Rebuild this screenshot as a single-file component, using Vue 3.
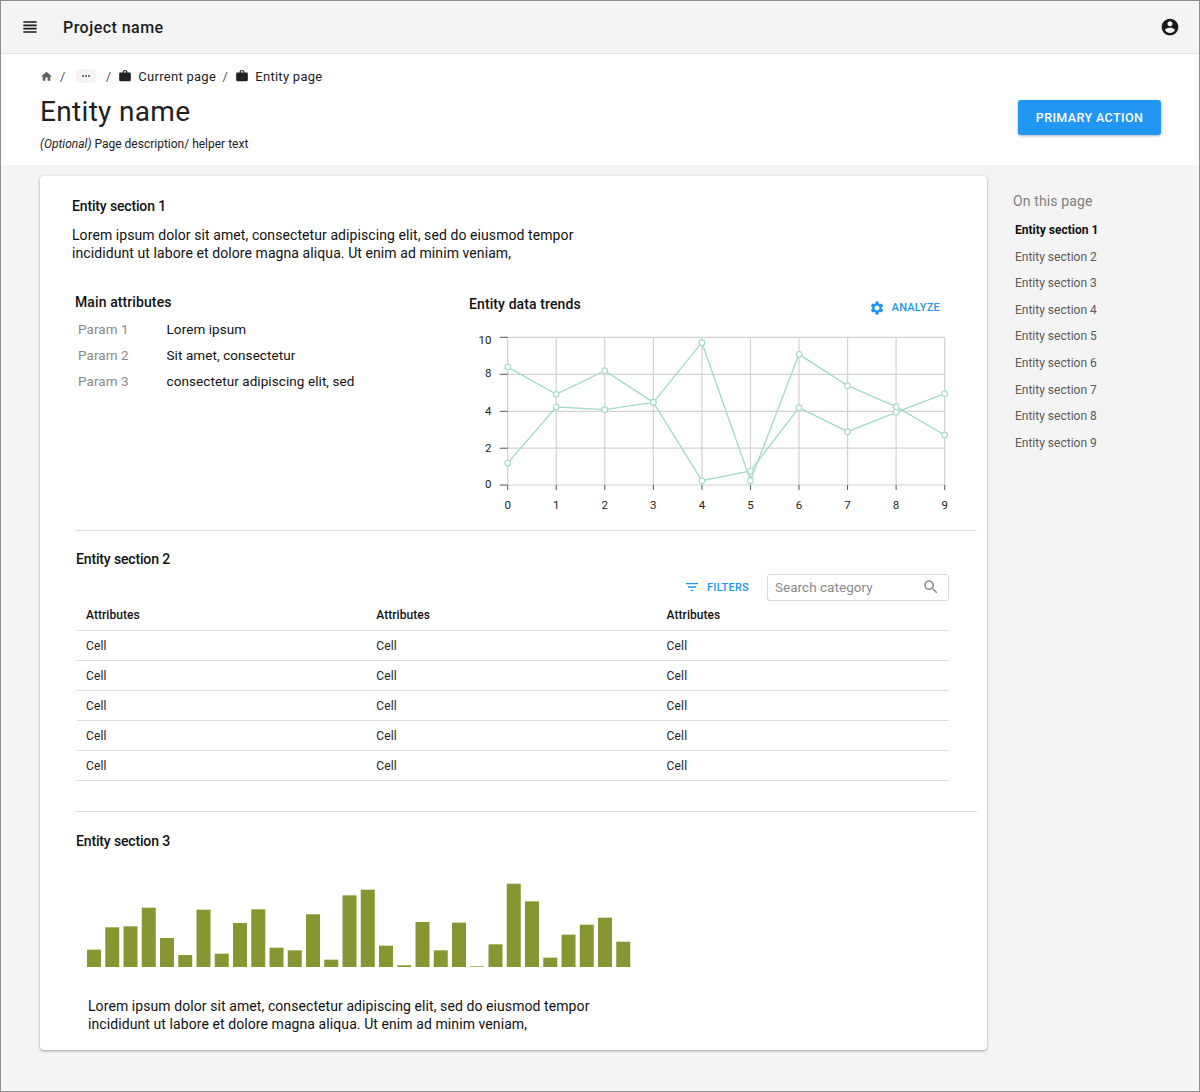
<script setup>
const sections = [1,2,3,4,5,6,7,8,9].map(n => `Entity section ${n}`)
const params = [['Param 1','Lorem ipsum'],['Param 2','Sit amet, consectetur'],['Param 3','consectetur adipiscing elit, sed']]
const rows = [1,2,3,4,5]
const lorem1 = 'Lorem ipsum dolor sit amet, consectetur adipiscing elit, sed do eiusmod tempor'
const lorem2 = 'incididunt ut labore et dolore magna aliqua. Ut enim ad minim veniam,'

const x0 = 47.7, dx = 48.55
const xs = Array.from({length:10},(_,i)=>x0+i*dx)
const yTicks = [{l:'10',y:47.3,ly:54},{l:'8',y:84.3,ly:87.3},{l:'4',y:121.3,ly:124.7},{l:'2',y:158.2,ly:161.7},{l:'0',y:195,ly:198.3}]
const s1 = [231,313,242,337,572,543,353,425,367,311].map(v=>v/3)
const s2 = [519,351,359,337,158,572,193,287,350,435].map(v=>v/3)
const series = [s1,s2].map(s=>s.map((y,i)=>({x:xs[i],y})))
const pts = s => s.map(p=>`${p.x},${p.y}`).join(' ')

const tops = [238,171,168,112,203,254,118,250,158,117,232,240,132,268,75,58,226,285,155,240,157,288,222,40,93,262,193,163,142,214]
const bars = tops.map((t,i)=>({x:i*18.25,h:(290-t)/3}))
</script>

<template>
  <div class="frame">
    <header class="topbar">
      <svg class="menu" viewBox="0 0 24 24" width="20" height="20"><path d="M4 15h16v-2H4v2zm0 4h16v-2H4v2zm0-8h16V9H4v2zm0-6v2h16V5H4z"/></svg>
      <span class="project">Project name</span>
      <svg class="account" viewBox="0 0 24 24" width="20" height="20"><path d="M12 2C6.48 2 2 6.48 2 12s4.48 10 10 10 10-4.48 10-10S17.52 2 12 2zm0 3c1.66 0 3 1.34 3 3s-1.34 3-3 3-3-1.34-3-3 1.34-3 3-3zm0 14.2c-2.5 0-4.71-1.28-6-3.22.03-1.99 4-3.08 6-3.08 1.99 0 5.97 1.09 6 3.08-1.29 1.94-3.5 3.22-6 3.22z"/></svg>
    </header>

    <section class="pagehead">
      <div class="headtext">
        <nav class="crumbs">
          <svg class="home" viewBox="0 0 24 24" width="13" height="13"><path d="M10 20v-6h4v6h5v-8h3L12 3 2 12h3v8z"/></svg>
          <span class="sep s1">/</span>
          <span class="dots"><svg viewBox="0 0 24 24" width="12" height="12"><path d="M6 10c-1.1 0-2 .9-2 2s.9 2 2 2 2-.9 2-2-.9-2-2-2zm12 0c-1.1 0-2 .9-2 2s.9 2 2 2 2-.9 2-2-.9-2-2-2zm-6 0c-1.1 0-2 .9-2 2s.9 2 2 2 2-.9 2-2-.9-2-2-2z"/></svg></span>
          <span class="sep s2">/</span>
          <svg class="work" viewBox="0 0 24 24" width="14" height="14"><path d="M20 6h-4V4c0-1.11-.89-2-2-2h-4c-1.11 0-2 .89-2 2v2H4c-1.11 0-1.99.89-1.99 2L2 19c0 1.11.89 2 2 2h16c1.11 0 2-.89 2-2V8c0-1.11-.89-2-2-2zm-6 0h-4V4h4v2z"/></svg>
          <span class="crumb">Current page</span>
          <span class="sep s3">/</span>
          <svg class="work" viewBox="0 0 24 24" width="14" height="14"><path d="M20 6h-4V4c0-1.11-.89-2-2-2h-4c-1.11 0-2 .89-2 2v2H4c-1.11 0-1.99.89-1.99 2L2 19c0 1.11.89 2 2 2h16c1.11 0 2-.89 2-2V8c0-1.11-.89-2-2-2zm-6 0h-4V4h4v2z"/></svg>
          <span class="crumb">Entity page</span>
        </nav>
        <h1>Entity name</h1>
        <p class="desc"><em>(Optional)</em> Page description/ helper text</p>
      </div>
      <button class="primary">PRIMARY ACTION</button>
    </section>

    <main class="content">
      <article class="card">
        <section class="intro">
          <h2 class="sec">Entity section 1</h2>
          <p class="lorem">{{ lorem1 }}<br>{{ lorem2 }}</p>
        </section>

        <section class="split">
          <div class="attrs">
            <h2>Main attributes</h2>
            <dl>
              <div v-for="p in params" :key="p[0]" class="param">
                <dt>{{ p[0] }}</dt><dd>{{ p[1] }}</dd>
              </div>
            </dl>
          </div>
          <div class="trends">
            <div class="trendhead">
              <h2>Entity data trends</h2>
              <span class="textbtn analyze">
                <svg viewBox="0 0 24 24" width="16" height="16"><path d="M19.14 12.94c.04-.3.06-.61.06-.94 0-.32-.02-.64-.07-.94l2.03-1.58c.18-.14.23-.41.12-.61l-1.92-3.32c-.12-.22-.37-.29-.59-.22l-2.39.96c-.5-.38-1.03-.7-1.62-.94l-.36-2.54c-.04-.24-.24-.41-.48-.41h-3.84c-.24 0-.43.17-.47.41l-.36 2.54c-.59.24-1.13.57-1.62.94l-2.39-.96c-.22-.08-.47 0-.59.22L2.74 8.87c-.12.21-.08.47.12.61l2.03 1.58c-.05.3-.09.63-.09.94s.02.64.07.94l-2.03 1.58c-.18.14-.23.41-.12.61l1.92 3.32c.12.22.37.29.59.22l2.39-.96c.5.38 1.03.7 1.62.94l.36 2.54c.05.24.24.41.48.41h3.84c.24 0 .44-.17.47-.41l.36-2.54c.59-.24 1.13-.56 1.62-.94l2.39.96c.22.08.47 0 .59-.22l1.92-3.32c.12-.22.07-.47-.12-.61l-2.01-1.58zM12 15.6c-1.98 0-3.6-1.62-3.6-3.6s1.62-3.6 3.6-3.6 3.6 1.62 3.6 3.6-1.62 3.6-3.6 3.6z"/></svg>
                ANALYZE
              </span>
            </div>
            <svg class="linechart" width="500" height="190" viewBox="0 40 500 190">
              <g stroke="#d2d2d2" stroke-width="1.2" fill="none">
                <line v-for="(x,i) in xs" :key="'v'+i" :x1="x" :x2="x" y1="47" y2="195"/>
                <line v-for="t in yTicks" :key="'h'+t.l" :x1="x0" x2="484.7" :y1="t.y" :y2="t.y"/>
              </g>
              <g stroke="#555" stroke-width="1">
                <line v-for="t in yTicks" :key="'t'+t.l" :x1="x0-8" :x2="x0" :y1="t.y" :y2="t.y"/>
                <line v-for="(x,i) in xs" :key="'u'+i" :x1="x" :x2="x" y1="195" y2="200"/>
              </g>
              <polyline v-for="(s,i) in series" :key="'s'+i" :points="pts(s)" fill="none" stroke="#a3dcc0" stroke-width="1.3"/>
              <g v-for="(s,i) in series" :key="'m'+i">
                <circle v-for="(p,j) in s" :key="j" :cx="p.x" :cy="p.y" r="2.8" fill="#fff" stroke="#a3dcc0" stroke-width="1.1"/>
              </g>
              <g class="ticklabel">
                <text v-for="t in yTicks" :key="'l'+t.l" x="31.5" :y="t.ly" text-anchor="end">{{ t.l }}</text>
                <text v-for="(x,i) in xs" :key="'x'+i" :x="x" y="219" text-anchor="middle">{{ i }}</text>
              </g>
            </svg>
          </div>
        </section>

        <section class="tablesec">
          <h2 class="sec">Entity section 2</h2>
          <div class="tools">
            <span class="textbtn filters">
              <svg viewBox="0 0 24 24" width="16" height="16"><path d="M10 18h4v-2h-4v2zM3 6v2h18V6H3zm3 7h12v-2H6v2z"/></svg>
              FILTERS
            </span>
            <div class="search">
              <span>Search category</span>
              <svg viewBox="0 0 24 24" width="18" height="18"><path d="M15.5 14h-.79l-.28-.27C15.41 12.59 16 11.11 16 9.5 16 5.91 13.09 3 9.5 3S3 5.91 3 9.5 5.91 16 9.5 16c1.61 0 3.09-.59 4.23-1.57l.27.28v.79l5 4.99L20.49 19l-4.99-5zm-6 0C7.01 14 5 11.99 5 9.5S7.01 5 9.5 5 14 7.01 14 9.5 11.99 14 9.5 14z"/></svg>
            </div>
          </div>
          <div class="table">
            <div class="tr th"><span>Attributes</span><span>Attributes</span><span>Attributes</span></div>
            <div v-for="r in rows" :key="r" class="tr"><span>Cell</span><span>Cell</span><span>Cell</span></div>
          </div>
        </section>

        <section class="barsec">
          <h2 class="sec">Entity section 3</h2>
          <svg class="barchart" width="544" height="90" viewBox="0 0 544 90">
            <rect v-for="(b,i) in bars" :key="i" :x="b.x" :y="88-b.h" width="14" :height="b.h" fill="#879632"/>
          </svg>
          <p class="lorem bottom">{{ lorem1 }}<br>{{ lorem2 }}</p>
        </section>
      </article>

      <aside class="toc">
        <div class="tochead">On this page</div>
        <a v-for="(s,i) in sections" :key="s" :class="{active:i===0}">{{ s }}</a>
      </aside>
    </main>
  </div>
</template>

<style scoped>
.frame { width:1200px; height:1092px; box-sizing:border-box; border:1px solid #8f8f8f; background:#f4f4f4; display:flex; flex-direction:column; overflow:hidden; font-family:Roboto,sans-serif; color:#000; }
.topbar { height:53px; flex:none; box-sizing:border-box; display:flex; align-items:center; padding:0 19px; border-bottom:1px solid #e3e3e3; }
.menu { fill:#1a1a1a; }
.project { margin-left:23px; font-size:16px; font-weight:500; letter-spacing:.47px; color:#1c1c1c; }
.account { margin-left:auto; fill:#1a1a1a; }

.pagehead { height:111px; flex:none; background:#fff; display:flex; justify-content:space-between; padding:0 38px 0 39px; }
.crumbs { display:flex; align-items:center; height:20px; margin-top:12px; font-size:13px; letter-spacing:.28px; color:#212121; }
.home { fill:#616161; }
.sep { color:#555; }
.s1 { margin-left:7px; }
.dots { display:flex; align-items:center; justify-content:center; width:20px; height:14px; margin-left:10px; background:#f4f4f4; border-radius:3px; fill:#555; }
.s2 { margin-left:10px; }
.work { fill:#212121; margin-left:7px; }
.crumb { margin-left:6px; }
.s3 { margin-left:6.5px; }
h1 { margin:8px 0 0; font-size:28px; line-height:36px; font-weight:400; letter-spacing:.32px; color:#212121; }
.desc { margin:6px 0 0; font-size:12px; line-height:16px; letter-spacing:0; color:#212121; }
.primary { align-self:flex-start; margin-top:46px; width:143px; height:35px; border:0; border-radius:3px; background:#2196f3; color:#fff; font:500 12.5px Roboto,sans-serif; letter-spacing:.4px; box-shadow:0 1px 3px rgba(0,0,0,.3); padding:0; }

.content { flex:1; display:flex; align-items:flex-start; padding:11px 0 0 39px; }
.card { width:947px; height:874px; flex:none; box-sizing:border-box; background:#fff; border-radius:4px; box-shadow:0 1px 3px rgba(0,0,0,.35); display:flex; flex-direction:column; }
h2 { margin:0; font-size:14px; line-height:20px; font-weight:500; letter-spacing:.1px; color:#111; }
h2.sec { letter-spacing:-.15px; }
.lorem { margin:0; font-size:14px; line-height:18px; letter-spacing:.083px; color:#111; }
.intro { padding:20px 0 0 32px; height:84px; box-sizing:content-box; }
.intro .lorem { margin-top:10px; }

.split { display:flex; margin-left:35px; height:244px; border-bottom:1px solid #dedede; box-sizing:border-box; width:902px; margin-top:7px; }
.attrs { width:394px; padding-top:5px; }
dl { margin:3.5px 0 0; }
.param { display:flex; height:26px; align-items:center; padding-left:3px; font-size:13.5px; letter-spacing:.08px; }
dt { width:88.5px; color:#8a8a8a; }
dd { margin:0; color:#111; }
.trends { flex:1; position:relative; }
.trendhead { display:flex; justify-content:space-between; align-items:center; width:471px; padding-top:6px; height:22px; }
.textbtn { display:inline-flex; align-items:center; font-size:11px; font-weight:500; letter-spacing:.25px; color:#2196f3; gap:7px; }
.textbtn svg { fill:#2196f3; }
.analyze { margin-top:7.5px; }
.linechart { display:block; margin:15px 0 0 -9px; }
.ticklabel { font-size:11.5px; fill:#222; }

.tablesec { padding:17.5px 38px 0 37px; height:280px; box-sizing:border-box; }
.tablesec h2 { margin-left:-1px; }
.tools { display:flex; justify-content:flex-end; align-items:center; gap:18px; margin-top:4.5px; height:28px; }
.search { width:182px; height:27px; box-sizing:border-box; border:1px solid #d9d9d9; border-radius:3px; display:flex; align-items:center; justify-content:space-between; padding:0 8px 0 7px; font-size:13.5px; letter-spacing:.03px; color:#8a8a8a; }
.search svg { fill:#8f8f8f; }
.tr { display:grid; grid-template-columns:290.3px 290.3px 1fr; height:30px; box-sizing:border-box; align-items:center; border-bottom:1px solid #dedede; font-size:12px; letter-spacing:.15px; padding:1px 0 0 9px; color:#222; }
.th { font-weight:500; height:30px; padding:0 0 1px 9px; letter-spacing:.05px; color:#111; }

.barsec { margin-left:35px; width:902px; border-top:1px solid #dedede; padding:18.5px 0 0 1px; box-sizing:border-box; flex:1; }
.barchart { display:block; margin:28.5px 0 0 11px; }
.lorem.bottom { margin:28px 0 0 12px; }

.toc { padding:16px 0 0 26px; display:flex; flex-direction:column; }
.tochead { font-size:14px; line-height:18px; letter-spacing:.13px; color:#808080; margin-bottom:7px; }
.toc a { margin-left:2px; height:26.6px; line-height:26.6px; font-size:12px; letter-spacing:0; color:#5a5a5a; }
.toc a.active { font-weight:700; color:#111; }
</style>
